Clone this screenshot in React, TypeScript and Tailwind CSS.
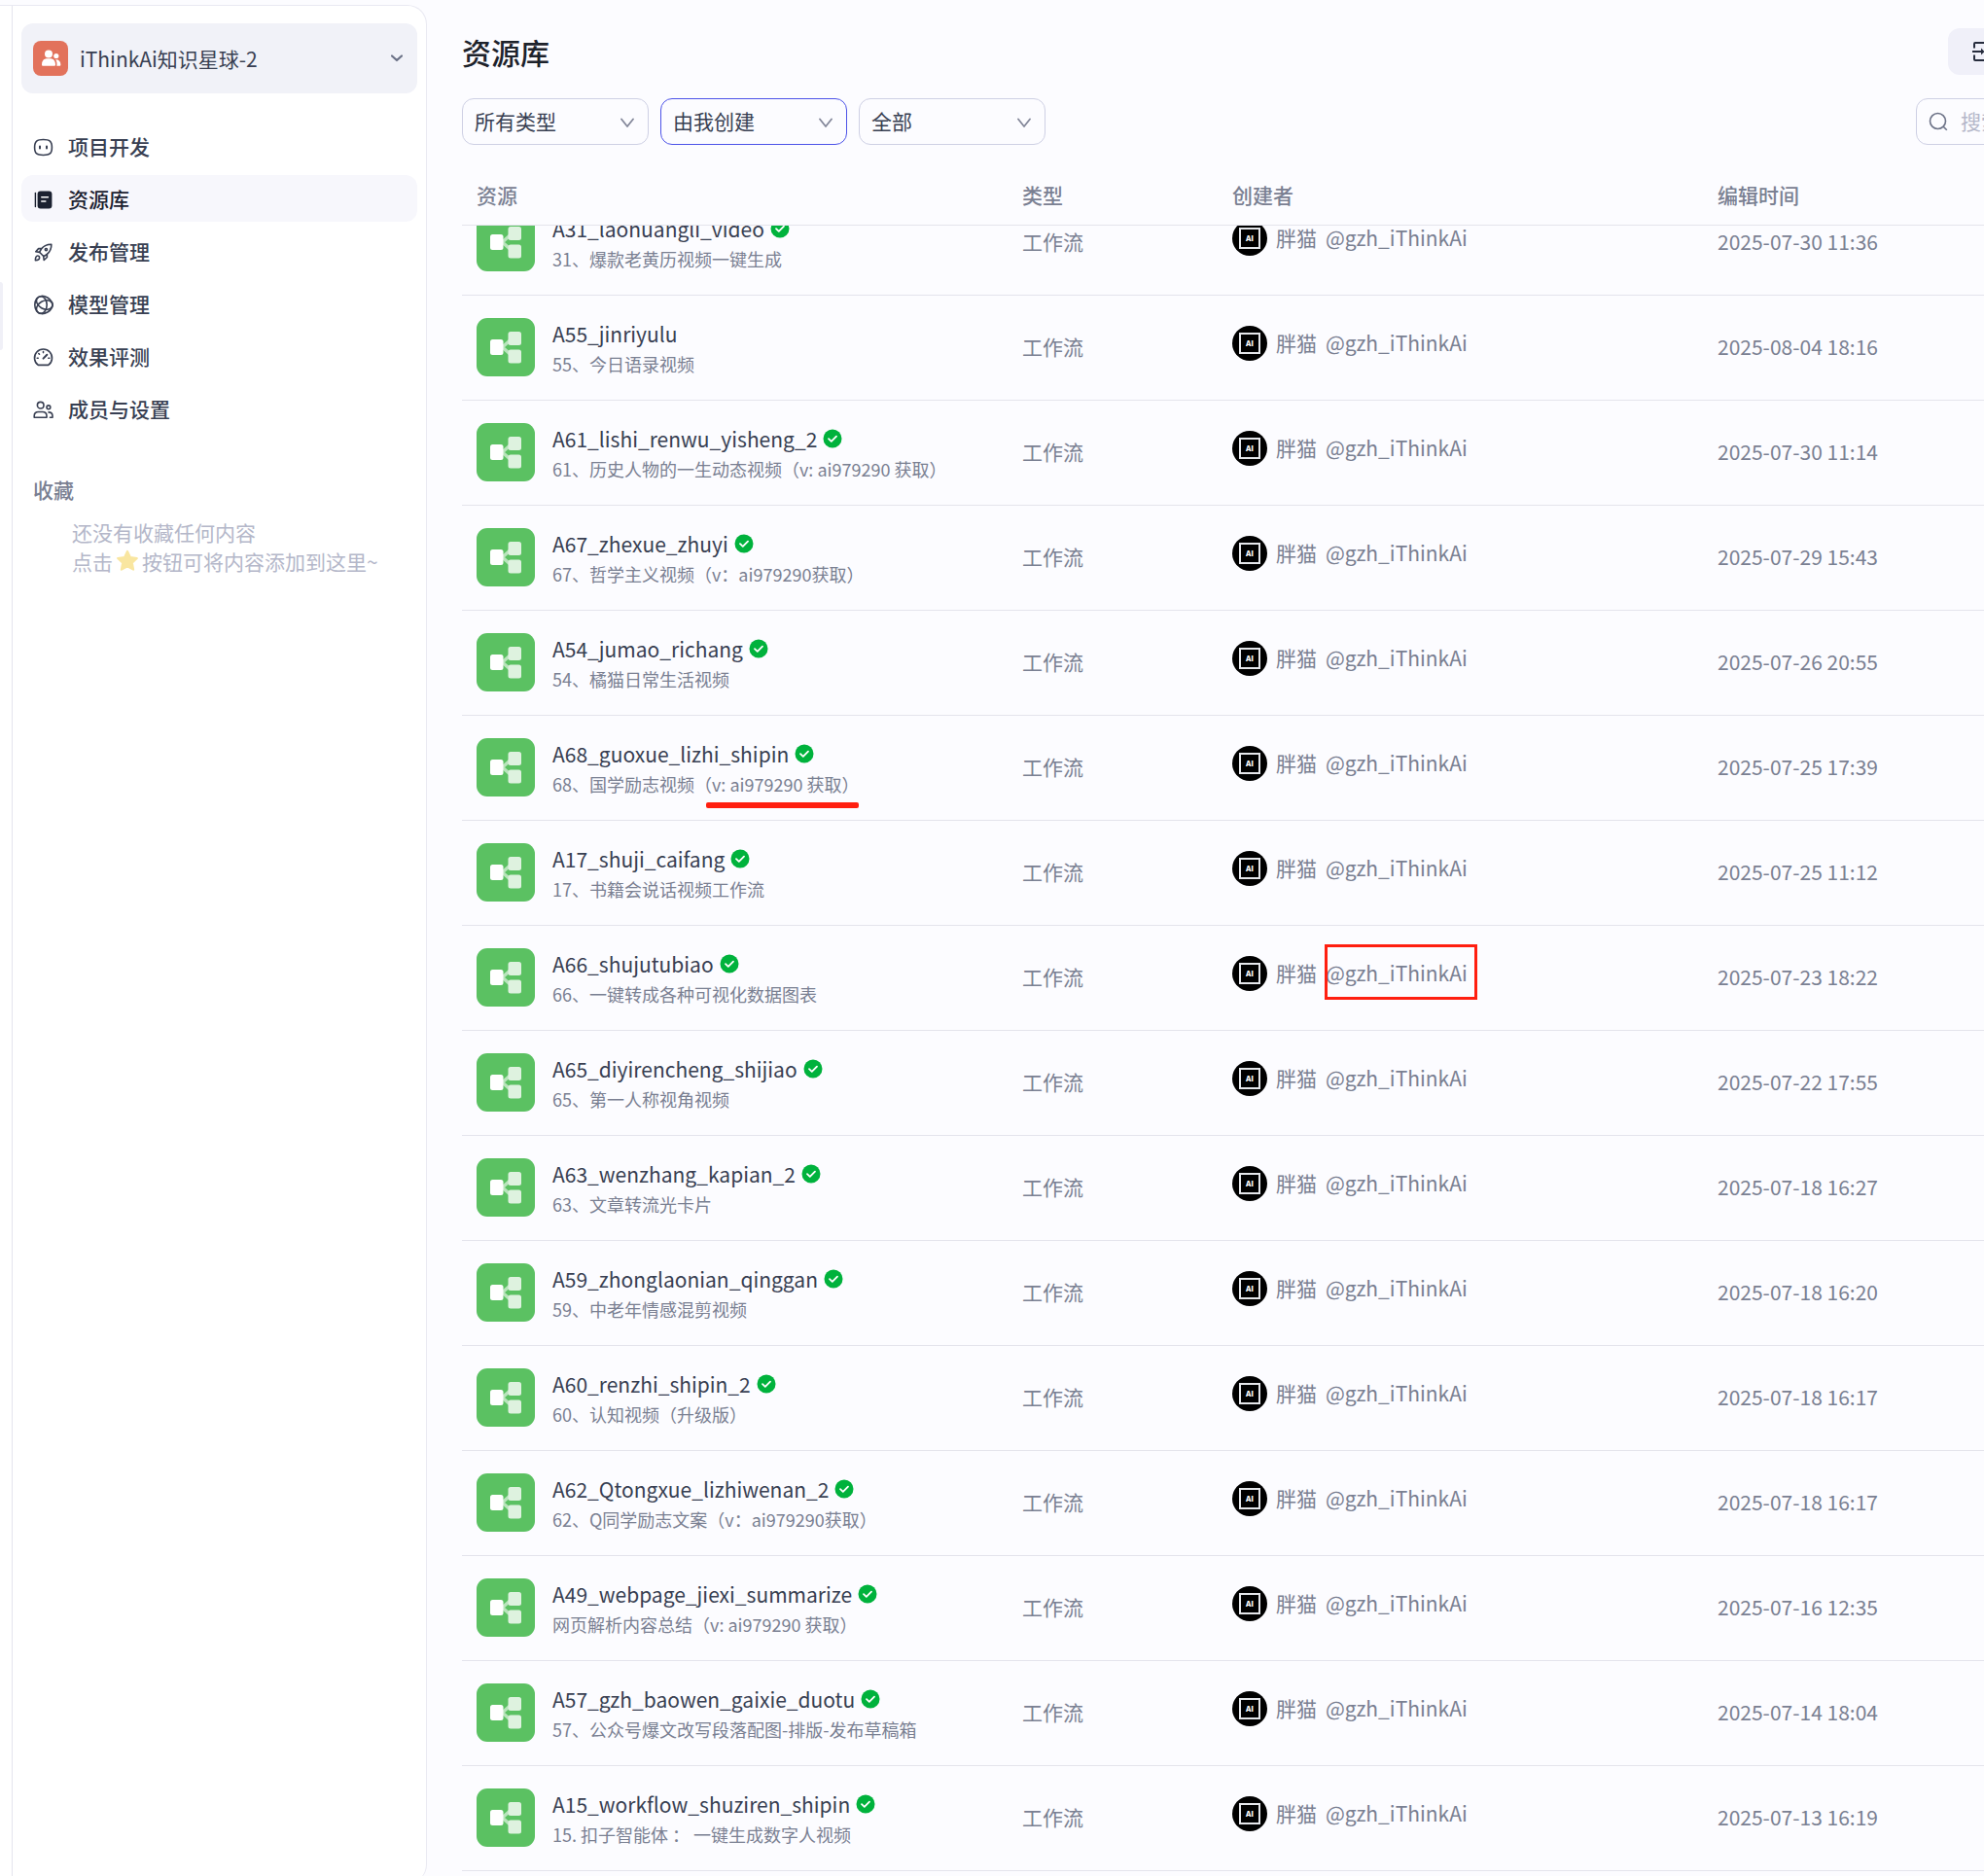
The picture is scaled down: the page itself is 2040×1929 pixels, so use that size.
import React, { useLayoutEffect, useRef } from "react";
import clsx from "clsx";

const navItems = [
  { label: "项目开发", icon: <BotIcon /> },
  { label: "资源库", icon: <LibraryIcon />, active: true },
  { label: "发布管理", icon: <RocketIcon /> },
  { label: "模型管理", icon: <ModelIcon /> },
  { label: "效果评测", icon: <GaugeIcon /> },
  { label: "成员与设置", icon: <MembersIcon /> },
];

const filters = [
  { label: "资源类型", value: "所有类型" },
  { label: "创建人", value: "由我创建", active: true },
  { label: "状态", value: "全部" },
];

type Resource = {
  name: string;
  desc: string;
  marked?: string;
  time: string;
  published?: boolean;
  boxed?: boolean;
};

const resources: Resource[] = [
  { name: "A31_laohuangli_video", desc: "31、爆款老黄历视频一键生成", time: "2025-07-30 11:36", published: true },
  { name: "A55_jinriyulu", desc: "55、今日语录视频", time: "2025-08-04 18:16" },
  { name: "A61_lishi_renwu_yisheng_2", desc: "61、历史人物的一生动态视频（v: ai979290 获取）", time: "2025-07-30 11:14", published: true },
  { name: "A67_zhexue_zhuyi", desc: "67、哲学主义视频（v：ai979290获取）", time: "2025-07-29 15:43", published: true },
  { name: "A54_jumao_richang", desc: "54、橘猫日常生活视频", time: "2025-07-26 20:55", published: true },
  { name: "A68_guoxue_lizhi_shipin", desc: "68、国学励志视频", marked: "（v: ai979290 获取）", time: "2025-07-25 17:39", published: true },
  { name: "A17_shuji_caifang", desc: "17、书籍会说话视频工作流", time: "2025-07-25 11:12", published: true },
  { name: "A66_shujutubiao", desc: "66、一键转成各种可视化数据图表", time: "2025-07-23 18:22", published: true, boxed: true },
  { name: "A65_diyirencheng_shijiao", desc: "65、第一人称视角视频", time: "2025-07-22 17:55", published: true },
  { name: "A63_wenzhang_kapian_2", desc: "63、文章转流光卡片", time: "2025-07-18 16:27", published: true },
  { name: "A59_zhonglaonian_qinggan", desc: "59、中老年情感混剪视频", time: "2025-07-18 16:20", published: true },
  { name: "A60_renzhi_shipin_2", desc: "60、认知视频（升级版）", time: "2025-07-18 16:17", published: true },
  { name: "A62_Qtongxue_lizhiwenan_2", desc: "62、Q同学励志文案（v：ai979290获取）", time: "2025-07-18 16:17", published: true },
  { name: "A49_webpage_jiexi_summarize", desc: "网页解析内容总结（v: ai979290 获取）", time: "2025-07-16 12:35", published: true },
  { name: "A57_gzh_baowen_gaixie_duotu", desc: "57、公众号爆文改写段落配图-排版-发布草稿箱", time: "2025-07-14 18:04", published: true },
  { name: "A15_workflow_shuziren_shipin", desc: "15. 扣子智能体 ： 一键生成数字人视频", time: "2025-07-13 16:19", published: true },
];

function BotIcon() {
  return (
    <svg width="21" height="21" viewBox="0 0 21 21" fill="none" stroke="currentColor" strokeWidth="1.6">
      <path d="M10.5 2.5c6.4 0 8.9 1.400 8.900 8s-2.500 8-8.900 8-8.900-1.400-8.900-8 2.500-8 8.900-8Z" />
      <path d="M7 9.600v1.800M14 9.600v1.800" strokeWidth="2" strokeLinecap="round" />
    </svg>
  );
}

function LibraryIcon() {
  return (
    <svg width="21" height="21" viewBox="0 0 21 21" fill="none">
      <path d="M2.4 3.4v14.2" stroke="currentColor" strokeWidth="1.4" strokeLinecap="round" />
      <rect x="4.6" y="1.6" width="14.8" height="17.8" rx="3" fill="currentColor" />
      <path d="M8.8 7.8h6.6M8.8 12h4" stroke="#fff" strokeWidth="1.6" strokeLinecap="round" />
    </svg>
  );
}

function RocketIcon() {
  return (
    <svg width="21" height="21" viewBox="0 0 21 21" fill="none" stroke="currentColor" strokeWidth="1.6" strokeLinejoin="round" strokeLinecap="round">
      <path d="M6.6 10.3C8.4 5.8 12 2.2 18.8 2.2c0 6.6-3.3 10.4-8 12.3Z" />
      <path d="M8.4 6.6H5.6L2.8 9.8l3.8.6M14.4 12.6v2.9l-3.2 3-.5-4" />
      <circle cx="13.4" cy="7.600" r="1.100" />
      <path d="M2.4 18.6c0-2.8.7-4.600 2.300-4.600 1.300 0 1.900.9 1.900 1.900 0 1.700-1.600 2.500-4.200 2.700Z" />
    </svg>
  );
}

function ModelIcon() {
  return (
    <svg width="21" height="21" viewBox="0 0 21 21" fill="none" stroke="currentColor" strokeWidth="1.6">
      <ellipse cx="8" cy="10.5" rx="6.200" ry="8.800" />
      <ellipse cx="8" cy="10.5" rx="6.200" ry="8.800" transform="rotate(120 10.5 10.5)" />
      <ellipse cx="8" cy="10.5" rx="6.200" ry="8.800" transform="rotate(240 10.5 10.5)" />
    </svg>
  );
}

function GaugeIcon() {
  return (
    <svg width="21" height="21" viewBox="0 0 21 21" fill="none" stroke="currentColor" strokeWidth="1.6" strokeLinecap="round" strokeLinejoin="round">
      <path d="M5.3 18.4a9 9 0 1 1 10.4 0Z" />
      <path d="M10.5 11.6 14.3 7.8" strokeWidth="2" />
      <path d="M10.5 4.6v1M5.8 6.500l.7.700M4.200 11.300h1M15.800 11.300h1" />
    </svg>
  );
}

function MembersIcon() {
  return (
    <svg width="21" height="21" viewBox="0 0 21 21" fill="none" stroke="currentColor" strokeWidth="1.6" strokeLinecap="round" strokeLinejoin="round">
      <circle cx="7.7" cy="5.7" r="3.3" />
      <path d="M1.2 18.2v-1.4c0-2.600 1.700-4.300 4.300-4.300h4.200c2.600 0 4.300 1.700 4.300 4.300v1.400Z" />
      <circle cx="15.9" cy="7.8" r="1.9" />
      <path d="M16 12.9c2.500 0 4 1.400 4 3.900v1.400h-2.600" />
    </svg>
  );
}

function TeamIcon() {
  return (
    <svg width="36" height="36" viewBox="0 0 36 36" fill="#fff">
      <circle cx="16" cy="13.5" r="4" />
      <path d="M9 24.5c0-4.300 2.300-6.300 5.300-6.300h3.400c3 0 5.300 2 5.300 6.300 0 .8-.5 1.300-1.300 1.300H10.300c-.8 0-1.300-.5-1.300-1.300Z" />
      <circle cx="23.8" cy="15.5" r="2.6" />
      <path d="M23 19.300c3.300-.3 5.400 1.700 5.400 5.200 0 .8-.5 1.300-1.200 1.300h-2.900c.5-2.600.2-4.800-1.300-6.500Z" />
    </svg>
  );
}

function StarIcon() {
  return (
    <svg className="mx-[3px] inline-block" width="24" height="24" viewBox="0 0 22 22">
      <path
        d="m11 1.8 2.7 5.7 6.3.8-4.6 4.3 1.2 6.3L11 15.8l-5.6 3.1 1.2-6.300L2 8.300l6.300-.8Z"
        fill="#f9e6a0"
        stroke="#f9e6a0"
        strokeWidth="2"
        strokeLinejoin="round"
      />
    </svg>
  );
}

function WorkflowIcon() {
  return (
    <svg className="shrink-0" width="60" height="60" viewBox="0 0 60 60">
      <rect width="60" height="60" rx="11" fill="#5bc162" />
      <path d="M35 22.500 26.500 30l8.500 7.500" fill="none" stroke="#b9e4bc" strokeWidth="3.500" />
      <rect x="14" y="22" width="13.500" height="16" rx="2.500" fill="#fff" />
      <rect x="32.500" y="14" width="13.500" height="14" rx="2.500" fill="#def2df" />
      <rect x="32.500" y="32.500" width="13.500" height="14" rx="2.500" fill="#def2df" />
    </svg>
  );
}

function PublishedIcon() {
  return (
    <svg className="mb-0.5 shrink-0" width="20" height="20" viewBox="0 0 20 20" fill="none">
      <circle cx="10" cy="10" r="9.5" fill="#00b23c" />
      <path d="m6 10.2 2.8 2.7 5.2-5.2" stroke="#fff" strokeWidth="1.8" strokeLinecap="round" strokeLinejoin="round" />
    </svg>
  );
}

function Avatar() {
  return (
    <span className="flex size-9 shrink-0 items-center justify-center rounded-full bg-black">
      <span className="flex size-[22px] items-center justify-center border-2 border-gray-200 text-[8px] leading-none font-black text-white">
        AI
      </span>
    </span>
  );
}

const Sidebar = () => {
  return (
    <aside className="mt-[5px] -mb-2 flex w-[439px] shrink-0 rounded-r-[20px] border-t border-r border-[#e9e9f2] bg-white">
      <div className="w-3 shrink-0 pt-[284px]">
        <div className="h-[70px] w-[3px] rounded-r-sm bg-[#f0f0f7]" />
      </div>
      <div className="flex-1 border-l border-[#e4e4ee] px-[9px] pt-[18px]">
        <button type="button" className="flex h-18 w-full items-center gap-3 rounded-xl bg-[#f1f2f8] px-3 text-[21px] text-[#383f52]">
          <span className="size-9 rounded-lg bg-[#e2725b]">
            <TeamIcon />
          </span>
          <span className="flex-1 pt-0.5 text-left">iThinkAi知识星球-2</span>
          <svg className="mr-[3px]" width="12" height="8" viewBox="0 0 12 8" fill="none">
            <path d="m1 1.5 5 4.5 5-4.5" stroke="#6b7186" strokeWidth="2.2" strokeLinecap="round" strokeLinejoin="round" />
          </svg>
        </button>

        <nav className="mt-[30px] flex flex-col gap-1.5">
          {navItems.map((item) => (
            <a
              key={item.label}
              href="#"
              className={clsx(
                "flex h-12 items-center gap-[15px] rounded-xl px-3 pt-0.5 text-[21px] font-medium",
                item.active ? "bg-[#f7f7fc] text-[#1b2130]" : "text-[#383f52]",
              )}
            >
              {item.icon}
              {item.label}
            </a>
          ))}
        </nav>

        <div className="mt-11 px-3 text-[21px] leading-[30px]">
          <h2 className="font-medium text-[#7a8092]">收藏</h2>
          <div className="mt-3.5 pl-10 text-[#b4b7c9]">
            <p>还没有收藏任何内容</p>
            <p className="flex items-center">
              点击
              <StarIcon />
              按钮可将内容添加到这里~
            </p>
          </div>
        </div>
      </div>
    </aside>
  );
};

const Toolbar = () => {
  return (
    <>
      <div className="flex h-12 items-center justify-between">
        <h1 className="text-[30px] font-medium text-[#1d222b]">资源库</h1>
        <button type="button" aria-label="导入" className="flex h-12 items-center rounded-xl bg-[#f0f0f9] pr-[15px] pl-6 text-[#262c3d]">
          <svg width="22" height="22" viewBox="0 0 22 22" fill="none" stroke="currentColor" strokeWidth="2">
            <path d="M3 7.500V3c0-.8.4-1 1-1h14c.6 0 1 .4 1 1v16c0 .6-.4 1-1 1H4c-.6 0-1-.4-1-1v-4.500" />
            <path d="M1 11h11" />
            <path d="m10 7.500 3.500 3.500-3.500 3.500Z" fill="currentColor" stroke="none" />
          </svg>
        </button>
      </div>

      <div className="mt-6 flex items-center justify-between">
        <div className="flex gap-3">
          {filters.map((filter) => (
            <div key={filter.label} className="relative">
              <select
                aria-label={filter.label}
                className={clsx(
                  "h-12 w-48 appearance-none rounded-xl border bg-transparent px-3 text-[21px] text-[#383f52] outline-none",
                  filter.active ? "border-[#4d53e8]" : "border-[#ced0e4]",
                )}
              >
                <option>{filter.value}</option>
              </select>
              <svg className="pointer-events-none absolute top-5 right-[15px]" width="14" height="11" viewBox="0 0 14 11" fill="none">
                <path d="m1 1.500 6 7.500 6-7.500" stroke="#84889a" strokeWidth="1.8" strokeLinecap="round" strokeLinejoin="round" />
              </svg>
            </div>
          ))}
        </div>
        <label className="flex h-12 w-[94px] items-center gap-[13px] rounded-xl border border-[#ced0e4] pl-3">
          <svg className="shrink-0" width="20" height="20" viewBox="0 0 20 20" fill="none" stroke="#6b7186" strokeWidth="1.6">
            <circle cx="9.5" cy="9.5" r="8" />
            <path d="m15.2 15.2 3.6 3.6" />
          </svg>
          <input
            type="text"
            aria-label="搜索"
            placeholder="搜索"
            className="min-w-0 flex-1 text-[21px] outline-none placeholder:text-[#b4b7c9]"
          />
        </label>
      </div>
    </>
  );
};

const App = () => {
  const listRef = useRef<HTMLDivElement>(null);

  useLayoutEffect(() => {
    if (listRef.current) listRef.current.scrollTop = 36;
  }, []);

  return (
    <div className="flex h-screen overflow-hidden bg-[#fcfcff] font-['Noto_Sans_CJK_SC',sans-serif]">
      <Sidebar />
      <main className="min-w-0 flex-1">
        {/* the list is wider than the window and runs off its right side */}
        <div className="-mr-15 flex h-full flex-col px-9 pt-[29px]">
          <Toolbar />
          <div ref={listRef} className="mt-6 min-h-0 flex-1 overflow-auto [scrollbar-width:none]">
            <table className="mb-9 w-full table-fixed border-separate border-spacing-0 text-left text-[21px] text-[#7a8092]">
              <thead>
                <tr className="[&>th]:sticky [&>th]:top-0 [&>th]:z-10 [&>th]:h-[59px] [&>th]:border-b [&>th]:border-[#e4e4ec] [&>th]:bg-[#fcfcff] [&>th]:px-[15px] [&>th]:pb-0.5 [&>th]:font-medium">
                  <th>资源</th>
                  <th className="w-54">类型</th>
                  <th className="w-[499px]">创建者</th>
                  <th className="w-[313px]">编辑时间</th>
                </tr>
              </thead>
              <tbody>
                {resources.map((item) => (
                  <tr key={item.name} className="[&>td]:h-27 [&>td]:border-b [&>td]:border-[#e4e4ec] [&>td]:px-[15px] [&>td]:pb-px">
                    <td>
                      <div className="flex items-center gap-[18px]">
                        <WorkflowIcon />
                        <div className="pt-[3px]">
                          <div className="flex h-[30px] items-center gap-1.5 text-[#383f52]">
                            {item.name}
                            {item.published && <PublishedIcon />}
                          </div>
                          <div className="text-[18px] leading-[30px]">
                            {item.desc}
                            {item.marked && (
                              <span className="relative inline-block">
                                {item.marked}
                                <span className="absolute right-0 -bottom-2.5 left-3 h-1.5 rounded-xs bg-[#ff1f10]" />
                              </span>
                            )}
                          </div>
                        </div>
                      </div>
                    </td>
                    <td>工作流</td>
                    <td>
                      <div className="flex items-center gap-[9px] pb-[9px]">
                        <Avatar />
                        <span>胖猫</span>
                        <span className="relative">
                          @gzh_iThinkAi
                          {item.boxed && (
                            <span className="absolute -top-3.5 -right-2.5 -bottom-3 -left-px border-3 border-[#ff1f10]" />
                          )}
                        </span>
                      </div>
                    </td>
                    <td>{item.time}</td>
                  </tr>
                ))}
              </tbody>
            </table>
          </div>
        </div>
      </main>
    </div>
  );
};

export default App;
